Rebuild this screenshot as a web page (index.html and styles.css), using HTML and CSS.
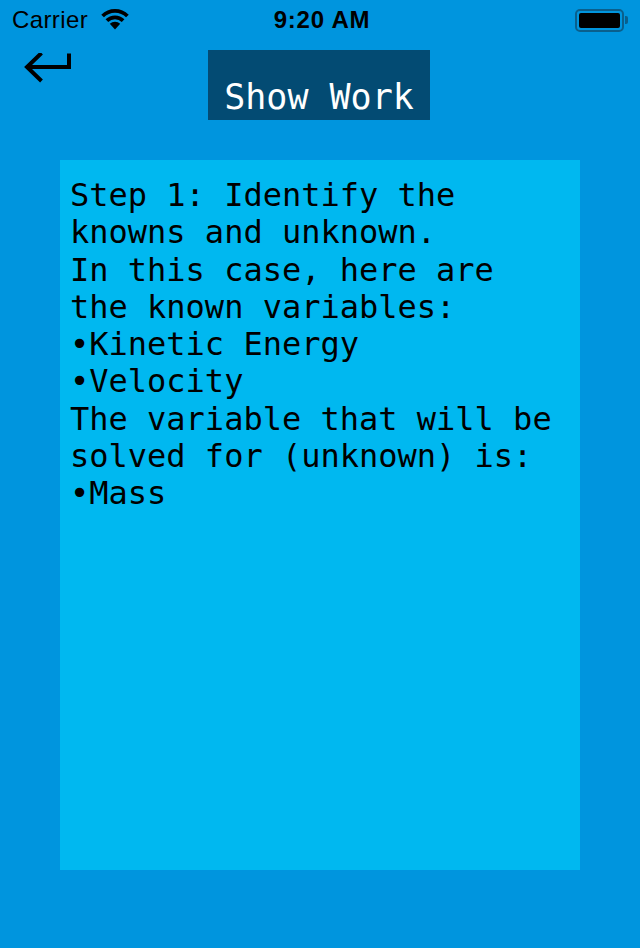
FILE: index.html
```html
<!DOCTYPE html>
<html>
<head>
<meta charset="utf-8">
<link rel="stylesheet" href="styles.css">
</head>
<body>
<div class="status">
  <div class="status-left">
    <span class="carrier">Carrier</span>
    <svg class="wifi" width="30" height="22" viewBox="0 0 30 22">
      <path d="M15 21.5 L9.8 15.8 A7.4 7.4 0 0 1 20.2 15.8 Z" fill="#000"/>
      <path d="M6.9 12.6 A11.6 11.6 0 0 1 23.1 12.6" fill="none" stroke="#000" stroke-width="3.8"/>
      <path d="M2.6 8 A17.6 17.6 0 0 1 27.4 8" fill="none" stroke="#000" stroke-width="3.8"/>
    </svg>
  </div>
  <div class="time">9:20 AM</div>
  <div class="status-right">
    <div class="battery"><div class="battery-fill"></div></div>
    <div class="battery-tip"></div>
  </div>
</div>
<div class="header">
  <div class="back">
    <svg width="50" height="32" viewBox="0 0 50 32">
      <path d="M45 0.5 V14 H3 M17.5 0 L3 14 L17.5 28" fill="none" stroke="#000" stroke-width="4" stroke-linejoin="miter"/>
    </svg>
  </div>
  <div class="title">Show Work</div>
  <div></div>
</div>
<div class="panel">Step 1: Identify the
knowns and unknown.
In this case, here are
the known variables:
•Kinetic Energy
•Velocity
The variable that will be
solved for (unknown) is:
•Mass</div>
</body>
</html>
```
FILE: styles.css
```css
html, body {
  margin: 0;
  padding: 0;
}
body {
  background: #0095de;
  width: 640px;
  height: 948px;
  overflow: hidden;
}
.status {
  height: 40px;
  display: grid;
  grid-template-columns: 1fr auto 1fr;
  align-items: center;
  font-family: "Liberation Sans", Arial, sans-serif;
  color: #000;
}
.status-left {
  display: flex;
  align-items: center;
  padding-left: 12px;
}
.carrier {
  font-size: 24px;
  letter-spacing: 0.4px;
}
.wifi {
  margin-left: 12px;
  margin-top: -2px;
}
.time {
  font-size: 24px;
  font-weight: bold;
  letter-spacing: 0.8px;
  padding-left: 4px;
}
.status-right {
  display: flex;
  justify-content: flex-end;
  align-items: center;
  padding-right: 12px;
}
.battery {
  border: 2px solid #0a5f8c;
  border-radius: 5px;
  padding: 2px;
  box-sizing: content-box;
  width: 41px;
  height: 15px;
}
.battery-fill {
  width: 100%;
  height: 100%;
  background: #000;
  border-radius: 2px;
}
.battery-tip {
  width: 3px;
  height: 8px;
  background: #0a5f8c;
  border-radius: 0 2px 2px 0;
  margin-left: 1px;
}
.header {
  display: grid;
  grid-template-columns: 1fr auto 1fr;
  padding-top: 10px;
  height: 70px;
}
.back {
  padding-left: 24px;
  padding-top: 3px;
}
.back svg {
  display: block;
}
.title {
  width: 222px;
  height: 70px;
  box-sizing: border-box;
  margin-left: -2px;
  background: #034b73;
  color: #fff;
  font-family: "DejaVu Sans Mono", monospace;
  font-size: 35px;
  text-align: center;
  padding-top: 27px;
  line-height: 41px;
}
.panel {
  margin: 40px 60px 0;
  height: 710px;
  box-sizing: border-box;
  background: #00b8f0;
  color: #000;
  font-family: "DejaVu Sans Mono", monospace;
  font-size: 32px;
  line-height: 37.3px;
  padding: 17px 10px 0;
  white-space: pre;
}
```
